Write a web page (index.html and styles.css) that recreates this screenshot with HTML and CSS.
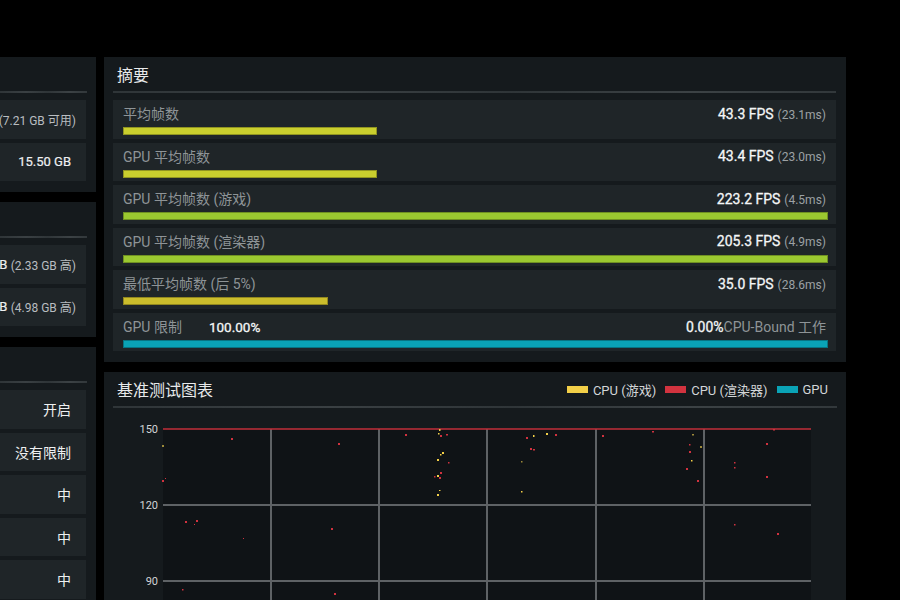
FILE: index.html
```html
<!DOCTYPE html>
<html lang="zh">
<head>
<meta charset="utf-8">
<title>性能报告</title>
<link rel="stylesheet" href="styles.css">
</head>
<body>
<div class="app">
  <aside class="left">
    <section class="panel">
      <div class="phead"></div>
      <div class="sep"></div>
      <div class="rows">
        <div class="lrow"><span class="v">8.29 GB</span>&nbsp;<span class="g">(7.21 GB 可用)</span></div>
        <div class="lrow solo"><span class="v">15.50 GB</span></div>
      </div>
    </section>
    <section class="panel">
      <div class="phead"></div>
      <div class="sep"></div>
      <div class="rows">
        <div class="lrow"><span class="v">4.65 GB</span>&nbsp;<span class="g">(2.33 GB 高)</span></div>
        <div class="lrow"><span class="v">9.31 GB</span>&nbsp;<span class="g">(4.98 GB 高)</span></div>
      </div>
    </section>
    <section class="panel">
      <div class="phead"></div>
      <div class="sep"></div>
      <div class="rows">
        <div class="lrow solo"><span class="v cjk">开启</span></div>
        <div class="lrow solo"><span class="v cjk">没有限制</span></div>
        <div class="lrow solo"><span class="v cjk">中</span></div>
        <div class="lrow solo"><span class="v cjk">中</span></div>
        <div class="lrow solo"><span class="v cjk">中</span></div>
      </div>
    </section>
  </aside>

  <main class="main">
    <section class="panel">
      <div class="phead"><h2>摘要</h2></div>
      <div class="sep"></div>
      <div class="rows">
        <div class="row">
          <div class="rtop"><span class="lbl">平均帧数</span><span class="val"><b>43.3 FPS</b> <small>(23.1ms)</small></span></div>
          <div class="bar"><i class="fill yg" style="width:36%"></i></div>
        </div>
        <div class="row">
          <div class="rtop"><span class="lbl">GPU 平均帧数</span><span class="val"><b>43.4 FPS</b> <small>(23.0ms)</small></span></div>
          <div class="bar"><i class="fill yg" style="width:36%"></i></div>
        </div>
        <div class="row">
          <div class="rtop"><span class="lbl">GPU 平均帧数 (游戏)</span><span class="val"><b>223.2 FPS</b> <small>(4.5ms)</small></span></div>
          <div class="bar"><i class="fill gr" style="width:100%"></i></div>
        </div>
        <div class="row">
          <div class="rtop"><span class="lbl">GPU 平均帧数 (渲染器)</span><span class="val"><b>205.3 FPS</b> <small>(4.9ms)</small></span></div>
          <div class="bar"><i class="fill gr" style="width:100%"></i></div>
        </div>
        <div class="row">
          <div class="rtop"><span class="lbl">最低平均帧数 (后 5%)</span><span class="val"><b>35.0 FPS</b> <small>(28.6ms)</small></span></div>
          <div class="bar"><i class="fill gd" style="width:29.1%"></i></div>
        </div>
        <div class="row">
          <div class="rtop"><span class="lbl">GPU 限制<b class="pct">100.00%</b></span><span class="val"><b>0.00%</b><span class="lbl">CPU-Bound 工作</span></span></div>
          <div class="bar"><i class="fill cy" style="width:100%"></i></div>
        </div>
      </div>
    </section>

    <section class="panel chart">
      <div class="phead">
        <h2>基准测试图表</h2>
        <ul class="legend">
          <li><i class="sw yl"></i>CPU (游戏)</li>
          <li><i class="sw rd"></i>CPU (渲染器)</li>
          <li><i class="sw cy"></i>GPU</li>
        </ul>
      </div>
      <div class="sep"></div>
      <svg class="plot" width="742" height="210" viewBox="0 0 742 210">
        <rect x="59" y="21" width="648" height="190" fill="#0f1316"/>
        <g stroke="#5e6265" stroke-width="2">
          <line x1="59" y1="97" x2="707" y2="97"/>
          <line x1="59" y1="173" x2="707" y2="173"/>
          <line x1="167" y1="21" x2="167" y2="210"/>
          <line x1="275" y1="21" x2="275" y2="210"/>
          <line x1="383" y1="21" x2="383" y2="210"/>
          <line x1="492" y1="21" x2="492" y2="210"/>
          <line x1="600" y1="21" x2="600" y2="210"/>
        </g>
        <line x1="59" y1="21" x2="707" y2="21" stroke="#c22f3a" stroke-width="1.6"/>
        <g class="ax" font-size="11" fill="#d2d5d7" text-anchor="end">
          <text x="54" y="25">150</text>
          <text x="54" y="101">120</text>
          <text x="54" y="177">90</text>
        </g>
        <g fill="#d0323f">
          <rect x="127" y="30" width="2" height="2"/>
          <rect x="58" y="72" width="2" height="2"/>
          <rect x="61" y="70" width="1" height="1"/>
          <rect x="81" y="113" width="2" height="2"/>
          <rect x="92" y="112" width="2" height="2"/>
          <rect x="90" y="116" width="1" height="1"/>
          <rect x="139" y="130" width="1" height="1"/>
          <rect x="78" y="181" width="1.5" height="1.5"/>
          <rect x="234" y="35" width="2" height="2"/>
          <rect x="227" y="120" width="2" height="2"/>
          <rect x="230" y="185" width="2" height="2"/>
          <rect x="301" y="26" width="2" height="2"/>
          <rect x="336" y="27" width="2" height="2"/>
          <rect x="342" y="26" width="2" height="1.5"/>
          <rect x="344" y="54" width="1.5" height="1.5"/>
          <rect x="336" y="64" width="2" height="2"/>
          <rect x="330" y="68" width="1.5" height="1.5"/>
          <rect x="335" y="69" width="2" height="2"/>
          <rect x="422" y="29" width="2" height="2"/>
          <rect x="451" y="26" width="2" height="2"/>
          <rect x="426" y="40" width="2" height="2"/>
          <rect x="429" y="41" width="2" height="1.5"/>
          <rect x="498" y="27" width="2" height="2"/>
          <rect x="548" y="23" width="2" height="1.5"/>
          <rect x="585" y="36" width="1.5" height="1.5"/>
          <rect x="585" y="43" width="2" height="2"/>
          <rect x="582" y="60" width="2" height="2"/>
          <rect x="593" y="72" width="2" height="2"/>
          <rect x="630" y="54" width="1.5" height="1.5"/>
          <rect x="630" y="59" width="1.5" height="1.5"/>
          <rect x="662" y="35" width="2" height="2"/>
          <rect x="669" y="21" width="2" height="1.5"/>
          <rect x="662" y="68" width="2" height="2"/>
          <rect x="630" y="116" width="1.5" height="1.5"/>
          <rect x="673" y="125" width="2" height="2"/>
        </g>
        <g fill="#f2cf48">
          <rect x="335" y="21" width="1.5" height="2"/>
          <rect x="334" y="25" width="1.5" height="1.5"/>
          <rect x="338" y="44" width="2" height="2"/>
          <rect x="336" y="46" width="1.5" height="1.5"/>
          <rect x="333" y="51" width="2" height="2"/>
          <rect x="333" y="67" width="2" height="2"/>
          <rect x="335" y="82" width="1.5" height="1"/>
          <rect x="333" y="86" width="2" height="2"/>
          <rect x="429" y="27" width="1.5" height="2"/>
          <rect x="442" y="25" width="2" height="2"/>
          <rect x="417" y="83" width="1.5" height="1.5"/>
          <rect x="587" y="52" width="1.5" height="1.5"/>
        </g>
        <g fill="#9c8a3a">
          <rect x="58" y="37" width="2" height="2"/>
          <rect x="417" y="53" width="1.5" height="1.5"/>
          <rect x="588" y="26" width="2" height="1.5"/>
          <rect x="596" y="38" width="2" height="2"/>
        </g>
      </svg>
    </section>
  </main>
</div>
</body>
</html>
```

FILE: styles.css
```css
* { box-sizing: border-box; }

html, body {
  margin: 0;
  background: #000;
}

body {
  width: 900px;
  height: 600px;
  overflow: hidden;
  font-family: Roboto, "Noto Sans CJK SC", "Noto Sans", sans-serif;
  color: #eef0f1;
}

.app {
  display: flex;
  gap: 8px;
  padding-top: 57px;
  align-items: flex-start;
}

.left {
  width: 96px;
  flex: none;
  display: flex;
  flex-direction: column;
  gap: 10px;
}

.main {
  width: 742px;
  flex: none;
  display: flex;
  flex-direction: column;
  gap: 10px;
}

.panel {
  background: #151a1d;
  padding: 0 10px 11px 9px;
}

.left .panel {
  padding-left: 0;
}

.phead {
  height: 34px;
  display: flex;
  align-items: center;
  justify-content: space-between;
  padding-left: 4px;
}

.phead h2 {
  margin: 0;
  font-size: 16px;
  font-weight: 400;
  color: #e8eaeb;
}

.sep {
  height: 2px;
  background: linear-gradient(90deg, #2f3538, #3a4043 30%, #2f3538 55%, #3c4245 80%, #32383b);
  margin-bottom: 7px;
}

.left .sep {
  margin-right: -1px;
}

.rows {
  display: flex;
  flex-direction: column;
  gap: 4px;
}

/* left column rows */
.lrow {
  height: 38.5px;
  background: #1f2528;
  display: flex;
  align-items: center;
  justify-content: flex-end;
  padding-right: 10px;
  white-space: nowrap;
  font-size: 13px;
}

.lrow.solo {
  padding-right: 15px;
}

.lrow .v {
  color: #eef0f1;
  -webkit-text-stroke: 0.2px #eef0f1;
}

.lrow .v.cjk {
  font-size: 14px;
  -webkit-text-stroke: 0;
}

.lrow .g {
  color: #b9bdc0;
  font-size: 12px;
}

/* summary rows */
.row {
  height: 38.5px;
  background: #1f2528;
  padding: 3px 8px 0 10px;
}

.rtop {
  height: 20px;
  display: flex;
  align-items: center;
  justify-content: space-between;
  padding-right: 2px;
  white-space: nowrap;
}

.lbl {
  color: #8e9497;
  font-size: 14px;
}

.pct {
  margin-left: 27px;
  font-weight: 400;
  font-size: 13.5px;
  color: #f4f6f7;
  -webkit-text-stroke: 0.3px #f4f6f7;
}

.val b {
  font-weight: 400;
  font-size: 14px;
  color: #f4f6f7;
  -webkit-text-stroke: 0.3px #f4f6f7;
}

.val small {
  font-size: 12px;
  color: #9ca1a4;
}

.bar {
  margin-top: 4px;
  height: 8px;
}

.fill {
  display: block;
  height: 100%;
  box-shadow: inset 0 0 0 1px rgba(0, 0, 0, 0.28);
}

.fill.yg { background: #cacf2e; }
.fill.gr { background: #9bc830; }
.fill.gd { background: #cbbd2c; }
.fill.cy { background: #0aa3b6; }

/* chart */
.chart {
  height: 260px;
  padding-left: 0;
  padding-right: 0;
}

.chart .phead {
  padding-left: 13px;
  padding-right: 18px;
}

.chart .sep {
  margin: 0 9px 0 9px;
}

.legend {
  list-style: none;
  margin: 0;
  padding: 0;
  display: flex;
  gap: 9px;
  font-size: 13px;
  color: #d3d6d8;
}

.legend li {
  display: flex;
  align-items: center;
  gap: 5px;
}

.sw {
  display: block;
  width: 21px;
  height: 7px;
}

.sw.yl { background: #f2cf48; }
.sw.rd { background: #d2333f; }
.sw.cy { background: #0aa3b6; }

.plot {
  display: block;
  font-family: Roboto, sans-serif;
}
```
